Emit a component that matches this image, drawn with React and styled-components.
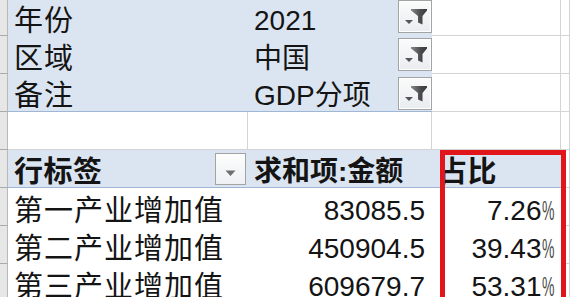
import React from "react";
import styled, { createGlobalStyle, css } from "styled-components";

const GlobalStyle = createGlobalStyle`
  html, body { margin: 0; padding: 0; background: #ffffff; overflow: hidden; }
  body { width: 570px; height: 297px; }
`;

const BLUE = "#dbe5f1";
const GRID = "#d4d4d4";
const BLUE_LINE = "#9fb6d5";

const Sheet = styled.div`
  position: relative;
  margin-top: -2px;
  display: grid;
  grid-template-columns: 8px 240px 184px 129px 1fr;
  grid-auto-rows: 38px;
  font-family: "Liberation Sans", "Noto Sans CJK SC", sans-serif;
  font-size: 28px;
  color: #141414;
`;

const RowHead = styled.div`
  box-sizing: border-box;
  background: #e6e6e6;
  border-right: 1px solid #b9b9b9;
  border-bottom: 1px solid #ababab;
`;

const Cell = styled.div`
  box-sizing: border-box;
  display: flex;
  align-items: flex-end;
  justify-content: ${(p) => (p.$right ? "flex-end" : "flex-start")};
  padding: 0 ${(p) => (p.$right ? "7px" : "0")} 1px ${(p) => (p.$right ? "0" : "6px")};
  line-height: 28px;
  white-space: nowrap;
  overflow: visible;
  background: ${(p) => (p.$blue ? BLUE : "#ffffff")};
  font-weight: ${(p) => (p.$bold ? 700 : 400)};
  ${(p) =>
    p.$grid &&
    css`
      border-right: 1px solid ${GRID};
      border-bottom: 1px solid ${GRID};
    `}
  ${(p) =>
    p.$edge &&
    css`
      border-bottom: 1px solid ${BLUE_LINE};
    `}
`;

const Han = styled.span`
  font-size: 29px;
  letter-spacing: ${(p) => (p.$tight ? "0.5px" : "1px")};
`;

const Pct = styled.span`
  display: inline-block;
  width: 12.5px;
  transform: scaleX(0.5);
  transform-origin: left bottom;
  color: #4a4a4a;
`;

const FilterButton = styled.div`
  box-sizing: border-box;
  align-self: flex-start;
  margin: ${(p) => p.$top || 2}px 0 0 auto;
  width: 34px;
  height: 33px;
  border: 1px solid #a3a3a3;
  background: linear-gradient(#fbfbfb, #e9ecf0);
  box-shadow: inset 0 0 0 1px #ffffff;
  display: flex;
  svg { display: block; }
`;

const SortButton = styled.div`
  box-sizing: border-box;
  align-self: flex-start;
  margin: 3px 2px 0 auto;
  width: 31px;
  height: 32px;
  border: 1px solid #a3a3a3;
  background: linear-gradient(#fdfdfd, #eef0f3);
  display: flex;
  svg { display: block; }
`;

const Highlight = styled.div`
  position: absolute;
  left: 440px;
  top: 152px;
  width: 126px;
  height: 170px;
  box-sizing: border-box;
  border: 5px solid #e0161b;
  pointer-events: none;
`;

const FunnelIcon = () => (
  <svg width="32" height="31" viewBox="1 1 32 31">
    <defs>
      <linearGradient id="fg" x1="0" y1="0" x2="1" y2="0">
        <stop offset="0" stopColor="#8a8a8a" />
        <stop offset="0.6" stopColor="#4a4a4a" />
        <stop offset="1" stopColor="#3a3a3a" />
      </linearGradient>
    </defs>
    <polygon points="7,20 15,20 11,24" fill="#555" />
    <polygon points="13,9 29,9 29,10.5 24.5,16 24.5,24.5 20,22.5 20,16 13,10.5" fill="url(#fg)" />
  </svg>
);

const SortIcon = () => (
  <svg width="29" height="30" viewBox="1 1 29 30">
    <polygon points="10.5,17.5 20.5,17.5 15.5,23" fill="#6e6e6e" />
  </svg>
);

const filters = [
  { label: "年份", value: "2021" },
  { label: "区域", value: "中国" },
  { label: "备注", value: "GDP分项" },
];

const rows = [
  { name: "第一产业增加值", amount: "83085.5", pct: "7.26" },
  { name: "第二产业增加值", amount: "450904.5", pct: "39.43" },
  { name: "第三产业增加值", amount: "609679.7", pct: "53.31" },
];

export default function App() {
  return (
    <>
      <GlobalStyle />
      <Sheet>
        {filters.map((f, i) => (
          <React.Fragment key={f.label}>
            <RowHead />
            <Cell $blue $edge={i === 2}>
              <Han>{f.label}</Han>
            </Cell>
            <Cell $blue $edge={i === 2}>
              {f.value}
              <FilterButton $top={i === 2 ? 3 : 2}>
                <FunnelIcon />
              </FilterButton>
            </Cell>
            <Cell $grid />
            <Cell $grid />
          </React.Fragment>
        ))}

        <RowHead />
        <Cell $grid />
        <Cell $grid />
        <Cell $grid />
        <Cell $grid />

        <RowHead />
        <Cell $blue $bold $edge>
          <Han $tight>行标签</Han>
          <SortButton>
            <SortIcon />
          </SortButton>
        </Cell>
        <Cell $blue $bold $edge>
          <span>求和项:金额</span>
        </Cell>
        <Cell $blue $bold $edge>
          <Han $tight>占比</Han>
        </Cell>
        <Cell $grid />

        {rows.map((r) => (
          <React.Fragment key={r.name}>
            <RowHead />
            <Cell>
              <Han>{r.name}</Han>
            </Cell>
            <Cell $right>{r.amount}</Cell>
            <Cell $right>
              {r.pct}
              <Pct>%</Pct>
            </Cell>
            <Cell $grid />
          </React.Fragment>
        ))}

        <Highlight />
      </Sheet>
    </>
  );
}
